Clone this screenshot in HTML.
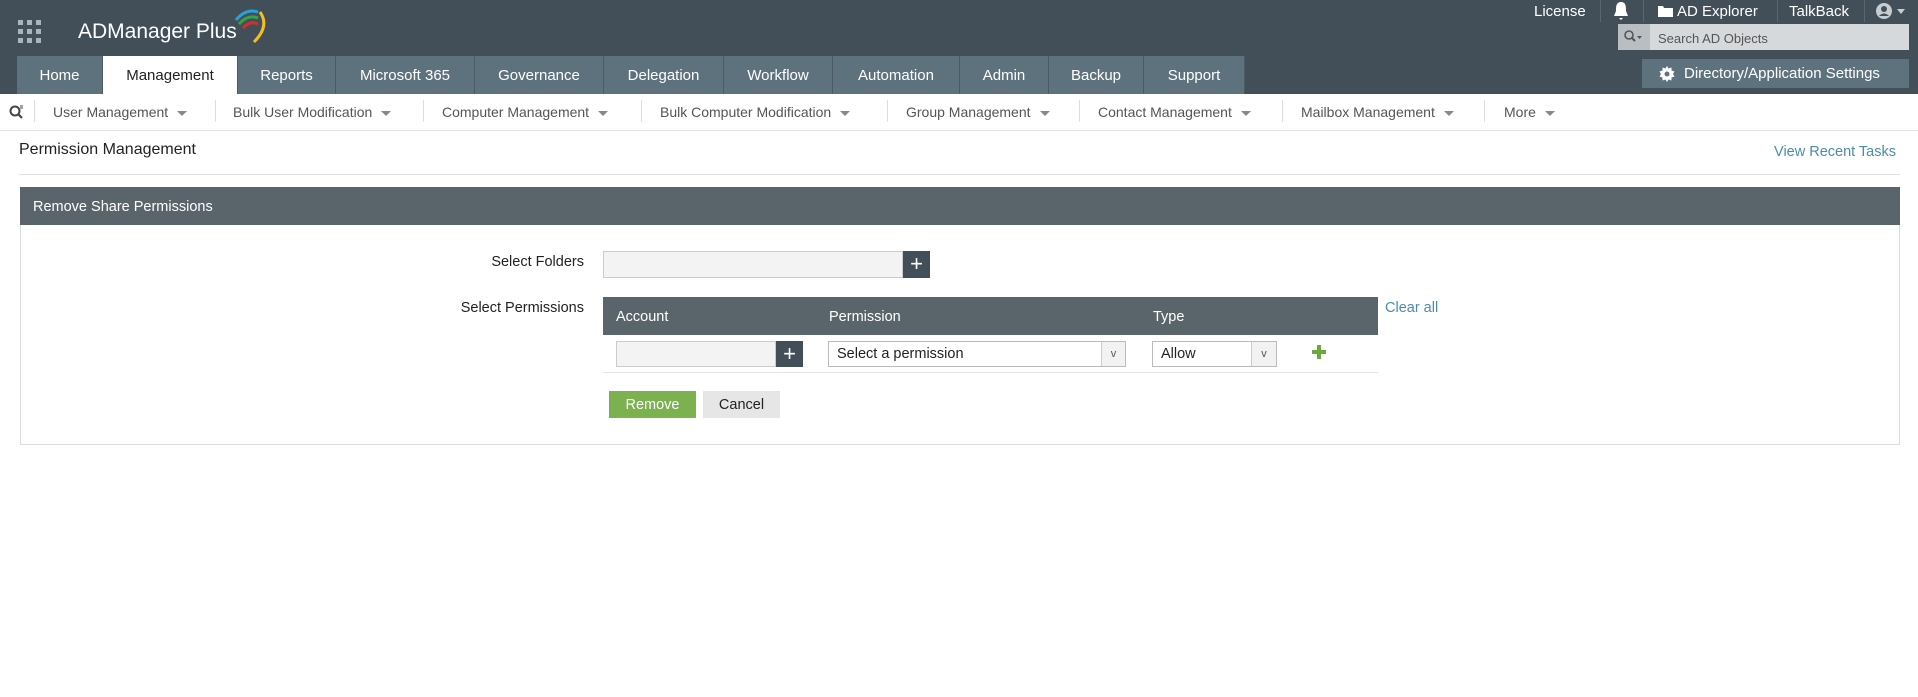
<!DOCTYPE html>
<html><head><meta charset="utf-8"><style>
*{box-sizing:border-box;margin:0;padding:0}
body{width:1918px;height:697px;background:#fff;font-family:"Liberation Sans",sans-serif;position:relative;overflow:hidden;color:#222}
.a{position:absolute}
#hdr{left:0;top:0;width:1918px;height:94px;background:#434f58}
.tab{position:absolute;top:56px;height:38px;background:#5e727e;color:#fff;font-size:15px;line-height:40px;text-align:center;border-right:1px solid #4b5a63}
.tab.on{background:#fff;color:#222}
.tr{color:#fff;font-size:15px;top:3px}
.sn{top:104px;font-size:14px;color:#555}
.sn:after{content:"";display:inline-block;margin-left:9px;border-left:5px solid transparent;border-right:5px solid transparent;border-top:5px solid #888;vertical-align:middle}
.sep{top:100px;width:1px;height:22px;background:#ddd}
.inp{background:#f3f3f3;border:1px solid #ccc}
.pl{background:#434f58;color:#fff;text-align:center;font-size:22px;line-height:26px}
</style></head><body>
<div id="hdr" class="a"></div>
<svg class="a" style="left:18px;top:20px" width="24" height="24"><g fill="#aab4bb"><rect x="0" y="0" width="5" height="5"/><rect x="9" y="0" width="5" height="5"/><rect x="18" y="0" width="5" height="5"/><rect x="0" y="9" width="5" height="5"/><rect x="9" y="9" width="5" height="5"/><rect x="18" y="9" width="5" height="5"/><rect x="0" y="18" width="5" height="5"/><rect x="9" y="18" width="5" height="5"/><rect x="18" y="18" width="5" height="5"/></g></svg>
<div class="a" style="left:78px;top:20px;color:#fff;font-size:21px">ADManager Plus</div>
<svg class="a" style="left:234px;top:6px" width="42" height="40"><path d="M2 14 Q12 2 24 6" stroke="#2aa0d8" stroke-width="3" fill="none"/><path d="M5 18 Q14 8 24 12" stroke="#3aa04a" stroke-width="3" fill="none"/><path d="M9 22 Q16 14 24 18" stroke="#d03030" stroke-width="3" fill="none"/><path d="M26 6 Q36 20 20 36" stroke="#f0c020" stroke-width="3" fill="none"/></svg>
<div class="a tr" style="left:1534px">License</div>
<div class="a" style="left:1600px;top:0;width:1px;height:22px;background:#5a666e"></div>
<svg class="a" style="left:1613px;top:1px" width="16" height="20"><path d="M8 1 C3 1 3 6 3 10 L1 15 L15 15 L13 10 C13 6 13 1 8 1Z M6 17 L10 17 L8 19Z" fill="#fff"/></svg>
<div class="a" style="left:1643px;top:0;width:1px;height:22px;background:#5a666e"></div>
<svg class="a" style="left:1658px;top:5px" width="15" height="12"><path d="M0 1 L5 1 L6 3 L15 3 L15 12 L0 12Z" fill="#fff"/></svg>
<div class="a tr" style="left:1677px">AD Explorer</div>
<div class="a" style="left:1777px;top:0;width:1px;height:22px;background:#5a666e"></div>
<div class="a tr" style="left:1789px">TalkBack</div>
<div class="a" style="left:1864px;top:0;width:1px;height:22px;background:#5a666e"></div>
<svg class="a" style="left:1875px;top:1px" width="36" height="20"><circle cx="9" cy="10" r="8" fill="#c6ccd0"/><circle cx="9" cy="8" r="3" fill="#434f58"/><path d="M4 15 Q9 10 14 15" fill="#434f58"/><path d="M22 8 L30 8 L26 13Z" fill="#c6ccd0"/></svg>
<div class="a" style="left:1618px;top:24px;width:291px;height:26px;background:#d6d9db"></div>
<div class="a" style="left:1618px;top:24px;width:32px;height:26px;background:#b8bec2"></div>
<svg class="a" style="left:1624px;top:30px" width="20" height="14"><circle cx="5" cy="5" r="4" stroke="#555" stroke-width="1.6" fill="none"/><path d="M8 8 L11 11" stroke="#555" stroke-width="2"/><path d="M13 6 L18 6 L15.5 9Z" fill="#555"/></svg>
<div class="a" style="left:1658px;top:31px;font-size:13px;color:#555">Search AD Objects</div>
<div class="a" style="left:1642px;top:59px;width:267px;height:29px;background:#5e727e;color:#fff;font-size:15px;line-height:30px;padding-left:42px">Directory/Application Settings</div>
<svg class="a" style="left:1659px;top:66px" width="16" height="16" viewBox="0 0 16 16"><path d="M8 0 L9.5 2.5 L12.5 1.5 L12.5 4.5 L15.5 5.5 L14 8 L15.5 10.5 L12.5 11.5 L12.5 14.5 L9.5 13.5 L8 16 L6.5 13.5 L3.5 14.5 L3.5 11.5 L0.5 10.5 L2 8 L0.5 5.5 L3.5 4.5 L3.5 1.5 L6.5 2.5Z" fill="#fff"/><circle cx="8" cy="8" r="2.5" fill="#5e727e"/></svg>
<div class="tab" style="left:17px;width:86px">Home</div>
<div class="tab on" style="left:103px;width:135px">Management</div>
<div class="tab" style="left:238px;width:98px">Reports</div>
<div class="tab" style="left:336px;width:139px">Microsoft 365</div>
<div class="tab" style="left:475px;width:129px">Governance</div>
<div class="tab" style="left:604px;width:120px">Delegation</div>
<div class="tab" style="left:724px;width:109px">Workflow</div>
<div class="tab" style="left:833px;width:127px">Automation</div>
<div class="tab" style="left:960px;width:89px">Admin</div>
<div class="tab" style="left:1049px;width:95px">Backup</div>
<div class="tab" style="left:1144px;width:101px">Support</div>
<div class="a" style="left:0;top:130px;width:1918px;height:1px;background:#e4e4e4"></div>
<svg class="a" style="left:9px;top:104px" width="16" height="16"><circle cx="6" cy="7" r="4.5" stroke="#444" stroke-width="2" fill="none"/><path d="M9 10 L13 14" stroke="#444" stroke-width="2.2"/><path d="M11 2 L14 2 M11 4 L14 4" stroke="#444" stroke-width="1"/></svg>
<div class="a sep" style="left:34px"></div>
<div class="a sn" style="left:53px">User Management</div>
<div class="a sep" style="left:215px"></div>
<div class="a sn" style="left:233px">Bulk User Modification</div>
<div class="a sep" style="left:423px"></div>
<div class="a sn" style="left:442px">Computer Management</div>
<div class="a sep" style="left:641px"></div>
<div class="a sn" style="left:660px">Bulk Computer Modification</div>
<div class="a sep" style="left:887px"></div>
<div class="a sn" style="left:906px">Group Management</div>
<div class="a sep" style="left:1079px"></div>
<div class="a sn" style="left:1098px">Contact Management</div>
<div class="a sep" style="left:1282px"></div>
<div class="a sn" style="left:1301px">Mailbox Management</div>
<div class="a sep" style="left:1484px"></div>
<div class="a sn" style="left:1504px">More</div>
<div class="a" style="left:19px;top:141px;font-size:16px;color:#222">Permission Management</div>
<div class="a" style="right:22px;top:144px;font-size:14.5px;color:#4a8cae">View Recent Tasks</div>
<div class="a" style="left:19px;top:174px;width:1881px;height:1px;background:#e2e2e2"></div>
<div class="a" style="left:20px;top:187px;width:1880px;height:258px;border:1px solid #ddd"></div>
<div class="a" style="left:20px;top:187px;width:1880px;height:38px;background:#59656b;color:#fff;font-size:14.5px;line-height:40px;padding-left:13px">Remove Share Permissions</div>
<div class="a" style="left:400px;width:184px;top:254px;text-align:right;font-size:14.5px">Select Folders</div>
<div class="a inp" style="left:603px;top:251px;width:300px;height:27px"></div>
<div class="a pl" style="left:903px;top:251px;width:27px;height:27px">+</div>
<div class="a" style="left:400px;width:184px;top:300px;text-align:right;font-size:14.5px">Select Permissions</div>
<div class="a" style="left:603px;top:297px;width:775px;height:38px;background:#59656b;color:#fff;font-size:14.5px;line-height:40px">
<span class="a" style="left:13px">Account</span><span class="a" style="left:226px">Permission</span><span class="a" style="left:550px">Type</span></div>
<div class="a" style="left:1385px;top:300px;font-size:14.5px;color:#4a8cae">Clear all</div>
<div class="a inp" style="left:616px;top:341px;width:160px;height:26px"></div>
<div class="a pl" style="left:776px;top:341px;width:27px;height:26px">+</div>
<div class="a" style="left:828px;top:341px;width:298px;height:26px;border:1px solid #bbb;background:#fff;font-size:14.5px;line-height:25px;padding-left:8px">Select a permission</div>
<div class="a" style="left:1101px;top:342px;width:24px;height:24px;border-left:1px solid #ccc;background:#f2f2f2;font-size:11px;line-height:24px;text-align:center;color:#555">v</div>
<div class="a" style="left:1152px;top:341px;width:125px;height:26px;border:1px solid #bbb;background:#fff;font-size:14.5px;line-height:25px;padding-left:8px">Allow</div>
<div class="a" style="left:1251px;top:342px;width:25px;height:24px;border-left:1px solid #ccc;background:#f2f2f2;font-size:11px;line-height:24px;text-align:center;color:#555">v</div>
<svg class="a" style="left:1312px;top:345px" width="14" height="14"><path d="M5 0 H9 V5 H14 V9 H9 V14 H5 V9 H0 V5 H5Z" fill="#6aaa3a"/></svg>
<div class="a" style="left:603px;top:372px;width:775px;height:1px;background:#e4e4e4"></div>
<div class="a" style="left:609px;top:391px;width:87px;height:27px;background:#7bb24f;color:#fff;font-size:14.5px;line-height:28px;text-align:center">Remove</div>
<div class="a" style="left:703px;top:391px;width:77px;height:27px;background:#e6e6e6;color:#222;font-size:14.5px;line-height:28px;text-align:center">Cancel</div>
</body></html>
